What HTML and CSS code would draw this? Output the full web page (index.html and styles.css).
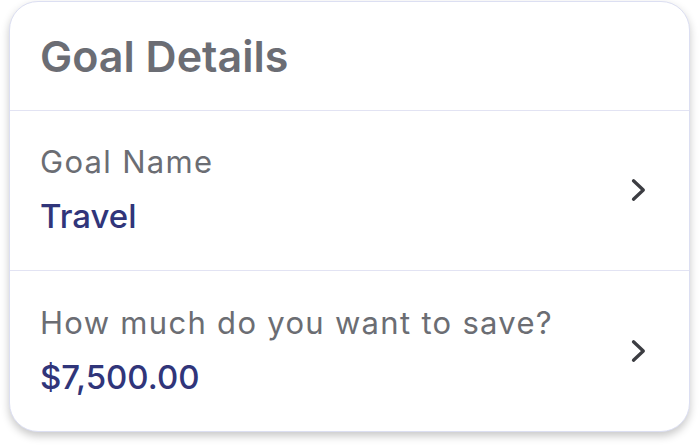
FILE: index.html
```html
<!DOCTYPE html>
<html>
<head>
<meta charset="utf-8">
<link rel="stylesheet" href="styles.css">
</head>
<body>
<div class="card">
  <div class="card-header">
    <h1 class="title">Goal Details</h1>
  </div>
  <div class="row">
    <div class="row-text">
      <div class="label">Goal Name</div>
      <div class="value">Travel</div>
    </div>
    <svg class="chevron" width="20" height="24" viewBox="0 0 20 24"><path d="M3.5 2.8 L13.3 12 L3.5 21.2" fill="none" stroke="#3c3d42" stroke-width="3.3" stroke-linecap="round" stroke-linejoin="round"/></svg>
  </div>
  <div class="row last">
    <div class="row-text">
      <div class="label">How much do you want to save?</div>
      <div class="value">$7,500.00</div>
    </div>
    <svg class="chevron" width="20" height="24" viewBox="0 0 20 24"><path d="M3.5 2.8 L13.3 12 L3.5 21.2" fill="none" stroke="#3c3d42" stroke-width="3.3" stroke-linecap="round" stroke-linejoin="round"/></svg>
  </div>
</div>
</body>
</html>
```

FILE: styles.css
```css
html, body {
  margin: 0;
  padding: 0;
  background: #ffffff;
}
body {
  width: 700px;
  height: 448px;
  overflow: hidden;
  font-family: Inter, "Noto Sans", sans-serif;
}
.card {
  margin: 1px 10px 0 9px;
  height: 431px;
  box-sizing: border-box;
  border: 1.5px solid #dcdff2;
  border-radius: 29px;
  background: #fff;
  box-shadow: 0 4px 9px rgba(0, 0, 0, 0.22);
  display: flex;
  flex-direction: column;
  overflow: hidden;
}
.card-header {
  height: 108px;
  flex: none;
  display: flex;
  align-items: center;
  padding-left: 30px;
  border-bottom: 1.5px solid #e2e3f3;
}
.title {
  margin: 0;
  font-size: 43px;
  line-height: 52px;
  font-weight: 600;
  color: #6b6d74;
}
.row {
  height: 158.5px;
  flex: none;
  display: flex;
  align-items: center;
  padding: 0 39px 0 30px;
  border-bottom: 1.5px solid #e2e3f3;
}
.row.last {
  border-bottom: none;
  flex: 1;
}
.row-text {
  flex: 1;
  display: flex;
  flex-direction: column;
  gap: 20px;
}
.label {
  font-size: 31px;
  line-height: 32px;
  letter-spacing: 1.3px;
  color: #6b6d73;
}
.value {
  font-size: 33px;
  line-height: 36px;
  font-weight: 500;
  color: #30357a;
}
.chevron {
  flex: none;
  display: block;
}
```
